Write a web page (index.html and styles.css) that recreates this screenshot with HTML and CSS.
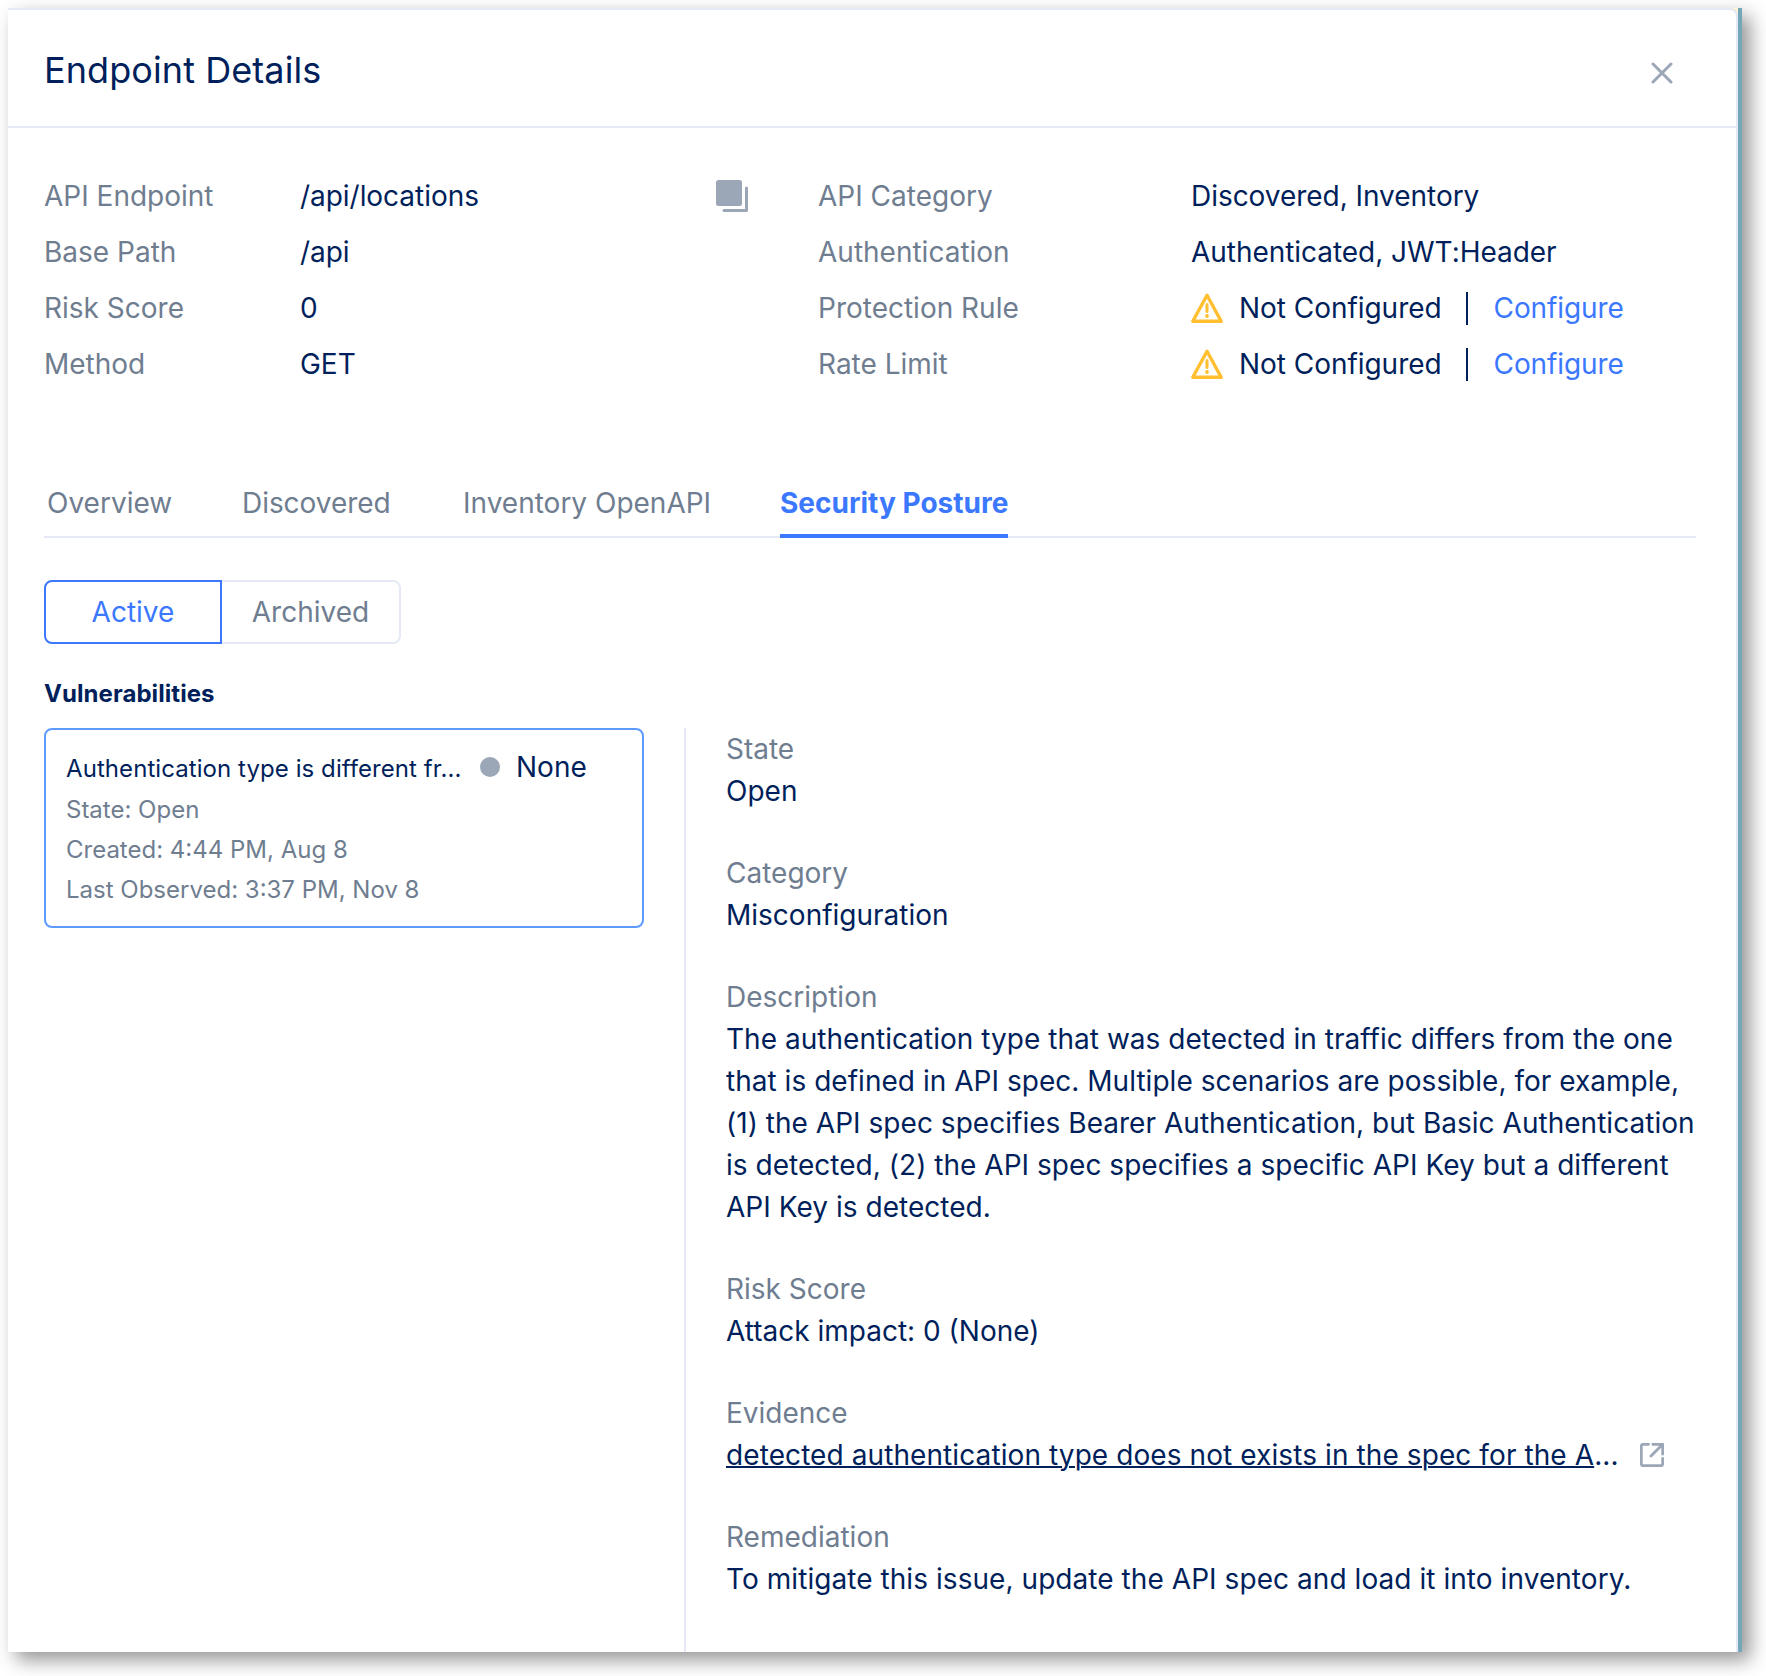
FILE: index.html
```html
<!DOCTYPE html>
<html lang="en">
<head>
<meta charset="utf-8">
<title>Endpoint Details</title>
<link rel="stylesheet" href="styles.css">
</head>
<body>
<main class="panel">
  <div class="sheet">
    <header class="header">
      <h1 class="title">Endpoint Details</h1>
      <svg class="close" width="22" height="22" viewBox="0 0 22 22" aria-label="Close"><path d="M2 2l18 18M20 2L2 20"/></svg>
    </header>

    <section class="summary">
      <dl class="facts facts-left">
        <dt>API Endpoint</dt>
        <dd class="with-copy">/api/locations
          <svg class="copy" width="32" height="32" viewBox="0 0 32 32"><rect x="0" y="0" width="26" height="26" rx="2.5"/><path d="M30.5 8v22.5H8"/></svg>
        </dd>
        <dt>Base Path</dt><dd>/api</dd>
        <dt>Risk Score</dt><dd>0</dd>
        <dt>Method</dt><dd>GET</dd>
      </dl>
      <dl class="facts facts-right">
        <dt>API Category</dt><dd>Discovered, Inventory</dd>
        <dt>Authentication</dt><dd>Authenticated, JWT:Header</dd>
        <dt>Protection Rule</dt>
        <dd>
          <svg class="warn" width="32" height="30" viewBox="0 0 32 30"><path d="M16 2.2L30.2 28.3H1.8z"/><path class="mark" d="M16 11.5v7"/><circle cx="16" cy="23" r="1.9"/></svg>
          <span>Not Configured</span><i class="bar"></i><a class="link">Configure</a>
        </dd>
        <dt>Rate Limit</dt>
        <dd>
          <svg class="warn" width="32" height="30" viewBox="0 0 32 30"><path d="M16 2.2L30.2 28.3H1.8z"/><path class="mark" d="M16 11.5v7"/><circle cx="16" cy="23" r="1.9"/></svg>
          <span>Not Configured</span><i class="bar"></i><a class="link">Configure</a>
        </dd>
      </dl>
    </section>

    <nav class="tabs">
      <a class="tab tab-overview">Overview</a>
      <a class="tab tab-discovered">Discovered</a>
      <a class="tab tab-inventory">Inventory OpenAPI</a>
      <a class="tab tab-active">Security Posture</a>
    </nav>

    <div class="toggle">
      <button class="option option-active">Active</button>
      <button class="option">Archived</button>
    </div>

    <h2 class="subtitle">Vulnerabilities</h2>

    <section class="content">
      <div class="list">
        <article class="card">
          <div class="card-head">
            <span class="card-title">Authentication type is different fr...</span>
            <i class="dot"></i>
            <span class="severity">None</span>
          </div>
          <p>State: Open</p>
          <p>Created: 4:44 PM, Aug 8</p>
          <p>Last Observed: 3:37 PM, Nov 8</p>
        </article>
      </div>
      <dl class="details">
        <div><dt>State</dt><dd>Open</dd></div>
        <div><dt>Category</dt><dd>Misconfiguration</dd></div>
        <div><dt>Description</dt><dd class="description">The authentication type that was detected in traffic differs from the one that is defined in API spec. Multiple scenarios are possible, for example, (1) the API spec specifies Bearer Authentication, but Basic Authentication is detected, (2) the API spec specifies a specific API Key but a different API Key is detected.</dd></div>
        <div><dt>Risk Score</dt><dd>Attack impact: 0 (None)</dd></div>
        <div><dt>Evidence</dt>
          <dd class="evidence">
            <span class="evidence-text"><u>detected authentication type does not exists in the spec for the A</u>...</span>
            <svg class="external" width="24" height="24" viewBox="0 0 24 24"><path d="M8.5 1.3H3.2a1.9 1.9 0 0 0-1.9 1.9v17.6a1.9 1.9 0 0 0 1.9 1.9h17.6a1.9 1.9 0 0 0 1.9-1.9v-5.3M12.8 1.3h9.9v9.9M22.2 1.8L11 13"/></svg>
          </dd>
        </div>
        <div><dt>Remediation</dt><dd class="remediation">To mitigate this issue, update the API spec and load it into inventory.</dd></div>
      </dl>
    </section>
  </div>
</main>
</body>
</html>
```
FILE: styles.css
```css
* { box-sizing: border-box; margin: 0; padding: 0; }

body {
  height: 1676px;
  padding: 8px 24px 24px 8px;
  overflow: hidden;
  background: #fff;
  color: #001f5b;
  font: 400 28px/42px Inter, "Liberation Sans", sans-serif;
  font-optical-sizing: none;
}

.panel {
  height: 1644px;
  border-right: 4px solid #74a8b8;
  background: #fff3d0;
  box-shadow: 8px 8px 18px rgba(0, 0, 0, 0.42);
}

.sheet {
  display: flex;
  flex-direction: column;
  height: 100%;
  border-top: 2px solid #e5e9f5;
  border-right: 2px solid #e5e9f5;
  border-top-right-radius: 8px;
  background: #fff;
}

.header {
  display: flex;
  flex: none;
  align-items: center;
  justify-content: space-between;
  height: 118px;
  padding: 3px 63px 0 36px;
  border-bottom: 2px solid #e5e9f5;
}
.title { font-size: 36px; font-weight: 400; line-height: 48px; letter-spacing: 0.08px; }
.close { margin-top: 7px; fill: none; stroke: #9ba7b6; stroke-width: 3; stroke-linecap: round; }

.summary {
  display: flex;
  flex: none;
  padding: 40px 40px 0 36px;
}
.facts { display: grid; grid-auto-rows: 56px; align-items: center; }
.facts-left { grid-template-columns: 256px 448px; margin-right: 70px; }
.facts-right { grid-template-columns: 373px auto; white-space: nowrap; }
dt { color: #6f7d90; }
.facts dd { display: flex; align-items: center; letter-spacing: -0.04px; }
.facts .with-copy { justify-content: space-between; }
.copy rect { fill: #9ba7b6; }
.copy path { fill: none; stroke: #9ba7b6; stroke-width: 3; stroke-linecap: round; stroke-linejoin: round; }
.warn { margin-right: 16px; fill: none; stroke: #ffbf30; stroke-width: 3.4; stroke-linecap: round; stroke-linejoin: round; }
.warn .mark { stroke-width: 3; }
.warn circle { fill: #ffbf30; stroke: none; }
.bar { width: 2px; height: 33px; margin: 0 26px 0 24px; background: #001f5b; }
.link { color: #3b78ff; letter-spacing: -0.1px; }

.tabs {
  display: flex;
  flex: none;
  height: 56px;
  margin: 90px 40px 0 36px;
  border-bottom: 2px solid #e5e9f5;
}
.tab { height: 56px; color: #6f7d90; white-space: nowrap; }
.tab-overview { width: 196px; padding-left: 3px; }
.tab-discovered { width: 220px; padding-left: 2px; letter-spacing: -0.05px; }
.tab-inventory { width: 320px; padding-left: 3px; }
.tab-active { color: #3b78ff; font-weight: 700; border-bottom: 4px solid #3b78ff; }

.toggle { display: flex; flex: none; margin: 42px 0 0 36px; }
.option {
  width: 181px;
  height: 64px;
  margin-left: -2px;
  border: 2px solid #e5e9f5;
  border-radius: 0 8px 8px 0;
  background: #fff;
  color: #6f7d90;
  font: inherit;
  font-optical-sizing: none;
}
.option-active {
  position: relative;
  width: 178px;
  margin-left: 0;
  border-color: #3b78ff;
  border-radius: 8px 0 0 8px;
  color: #3b78ff;
}

.subtitle {
  flex: none;
  height: 36px;
  margin: 32px 0 16px 36px;
  font-size: 24px;
  font-weight: 700;
  line-height: 36px;
  letter-spacing: 0.06px;
}

.content { display: flex; flex: 1; min-height: 0; padding: 0 40px 0 36px; }
.list { flex: none; width: 640px; }
.card {
  width: 600px;
  height: 200px;
  padding: 18px 20px;
  border: 2px solid #5c9bff;
  border-radius: 8px;
  color: #6f7d90;
  font-size: 24px;
  line-height: 40px;
}
.card-head { display: flex; align-items: flex-start; height: 42px; color: #001f5b; }
.card-title { width: 398px; padding-top: 1px; white-space: nowrap; letter-spacing: 0.07px; }
.dot { width: 20px; height: 20px; margin: 9px 16px 0; border-radius: 50%; background: #9ba7b6; }
.severity { font-size: 28px; line-height: 38px; }

.details {
  display: flex;
  flex: 1;
  flex-direction: column;
  gap: 40px;
  min-width: 0;
  padding-left: 40px;
  border-left: 2px solid #e5e9f5;
}
.description { letter-spacing: 0.03px; }
.remediation { letter-spacing: 0.06px; }
.evidence { display: flex; align-items: center; }
.evidence-text { width: 894px; white-space: nowrap; letter-spacing: 0.09px; }
.evidence u { text-decoration-thickness: 2px; }
.external { margin-left: 20px; fill: none; stroke: #9ba7b6; stroke-width: 2.8; stroke-linecap: round; stroke-linejoin: round; }
```
